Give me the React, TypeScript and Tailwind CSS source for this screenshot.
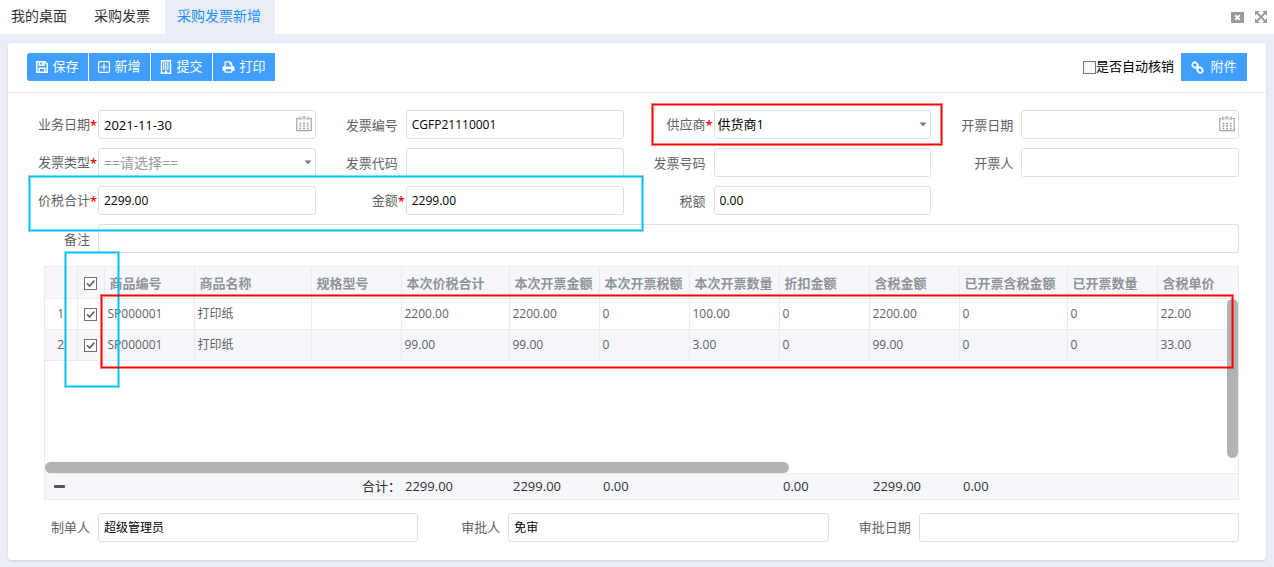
import type { ReactNode } from 'react';

const tabs = ['我的桌面', '采购发票', '采购发票新增'];

const columns = [
  { name: '商品编号', width: 'w-[90px]' },
  { name: '商品名称', width: 'w-[117px]' },
  { name: '规格型号', width: 'w-[90px]' },
  { name: '本次价税合计', width: 'w-[108px]' },
  { name: '本次开票金额', width: 'w-[90px]' },
  { name: '本次开票税额', width: 'w-[90px]' },
  { name: '本次开票数量', width: 'w-[90px]' },
  { name: '折扣金额', width: 'w-[90px]' },
  { name: '含税金额', width: 'w-[90px]' },
  { name: '已开票含税金额', width: 'w-[108px]' },
  { name: '已开票数量', width: 'w-[90px]' },
  { name: '含税单价', width: '' },
];

const rows = [
  ['SP000001', '打印纸', '', '2200.00', '2200.00', '0', '100.00', '0', '2200.00', '0', '0', '22.00'],
  ['SP000001', '打印纸', '', '99.00', '99.00', '0', '3.00', '0', '99.00', '0', '0', '33.00'],
];

const totals = ['', '', '合计：', '2299.00', '2299.00', '0.00', '', '0.00', '2299.00', '0.00', '', ''];

const SaveIcon = () => (
  <svg width="12" height="12" viewBox="0 0 12 12" fill="none" stroke="currentColor" strokeWidth="1.5">
    <path d="M.8.8h8.100L11.200 3.100V11.200H.8z" strokeLinejoin="round" />
    <path d="M3.400 1v3.200h4.600V1M3.200 11V7.200h5.600V11" />
    <path d="M6.600 1.500v2" />
  </svg>
);

const AddIcon = () => (
  <svg width="12" height="12" viewBox="0 0 12 12" fill="none" stroke="currentColor" strokeWidth="1.2">
    <rect x=".6" y=".6" width="10.800" height="10.800" rx="1.2" />
    <path d="M6 2.500v7M2.500 6h7" />
  </svg>
);

const BuildingIcon = () => (
  <svg width="12" height="14" viewBox="0 0 12 14" fill="none" stroke="currentColor">
    <path d="M1.5 13V.8h9V13M.6 13.200h10.800" strokeWidth="1.4" />
    <path d="M3 3h6M3 5h6M3 7h6M3 9h6" strokeWidth="1.300" strokeDasharray="1.300 .5" />
    <path d="M6 10.500V13" strokeWidth="2.200" />
  </svg>
);

const PrintIcon = () => (
  <svg width="13" height="12" viewBox="0 0 13 12">
    <path
      fill="currentColor"
      fillRule="evenodd"
      d="M2.5 5V1q0-.7.7-.7h5l2.2 2.2V5h.5q1.700 0 1.700 1.700v2.600q0 .5-.5.5h-1.700v1.200q0 .7-.7.7H3.200q-.7 0-.7-.7V9.800H1q-.5 0-.5-.5V6.700Q.5 5 2.200 5zM3.700 1.500v4h5.500V3.700H7.500V1.500zM3.700 8.300v2.200h5.500V8.300z"
    />
  </svg>
);

const LinkIcon = () => (
  <svg width="13" height="13" viewBox="0 0 13 13" fill="none" stroke="currentColor" strokeWidth="1.8">
    <rect x="1.200" y="1.800" width="5.600" height="4.600" rx="2.300" transform="rotate(45 4 4.100)" />
    <rect x="6.200" y="6.800" width="5.600" height="4.600" rx="2.300" transform="rotate(45 9 9.100)" />
    <path d="M5.200 5.200l2.600 2.600" strokeWidth="1.500" />
  </svg>
);

const CloseIcon = () => (
  <svg width="13" height="11" viewBox="0 0 13 11">
    <rect width="13" height="11" rx="1" fill="#999" />
    <path d="M4.200 3.200l4.600 4.600M8.800 3.200L4.200 7.800" stroke="#fff" strokeWidth="2" />
  </svg>
);

const ExpandIcon = () => (
  <svg width="12" height="12" viewBox="0 0 12 12" fill="#999" stroke="#999">
    <path d="M2 2l8 8M10 2l-8 8" strokeWidth="1.800" />
    <path d="M0 0h4.800L0 4.800zM12 0v4.800L7.200 0zM0 12V7.200L4.800 12zM12 12H7.200L12 7.200z" stroke="none" />
  </svg>
);

const CalendarIcon = () => (
  <svg
    className="pointer-events-none absolute right-1 top-1.5"
    width="16"
    height="16"
    viewBox="0 0 16 16"
    fill="none"
    stroke="#a3a3a3"
  >
    <path d="M2.800 2.500H.8v12.200h14.400V2.500h-2M6 2.500h.8M9.200 2.500h.8" strokeWidth="1.200" />
    <path d="M3.500 .5v3h1.500v-3M7.200 3.500v-3h1.500v3M11 .5v3h1.500v-3" strokeWidth=".8" />
    <path d="M3.300 7.500h9.700M3.300 10h9.700M3.300 12.500h9.700" strokeWidth="1.500" strokeDasharray="2 1.700" />
  </svg>
);

const ArrowIcon = () => (
  <svg className="pointer-events-none absolute right-1 top-3" width="8" height="5" viewBox="0 0 8 5">
    <path d="M.5.5h7L4 4.200z" fill="#777" />
  </svg>
);

// Rectangular marker drawn over the form
const Marker = ({ className }: { className: string }) => (
  <div className={`pointer-events-none absolute z-10 border ${className}`} />
);

const red = 'border-[#ff0000] shadow-[0_0_0_1px_rgba(255,0,0,0.5),inset_0_0_0_1px_rgba(255,0,0,0.5)]';
const blue = 'border-[#00bfff] shadow-[0_0_0_1px_rgba(0,191,255,0.5),inset_0_0_0_1px_rgba(0,191,255,0.5)]';

const box = 'block h-[29px] w-full rounded-[3px] border border-[#dcdfe6] bg-white outline-none';

type FieldProps = {
  id: string;
  label: string;
  value?: string;
  required?: boolean;
  select?: boolean;
  date?: boolean;
  className?: string;
  children?: ReactNode;
};

const Field = ({ id, label, value = '', required, select, date, className = '', children }: FieldProps) => (
  <div className={`relative flex items-center ${className}`}>
    <label htmlFor={id} className="flex w-[90px] shrink-0 justify-end pt-0.5 text-[13px] text-[#606266]">
      {label}
      <span className="w-2 pt-px font-semibold text-[#ff0000]">{required && '*'}</span>
    </label>
    <div className="relative min-w-0 flex-1">
      {select ? (
        <>
          <select
            id={id}
            className={`${box} appearance-none ${
              value.startsWith('=') ? 'px-[5px] text-sm text-[#999]' : 'px-[3px] text-[13px] text-black'
            }`}
          >
            <option>{value}</option>
          </select>
          <ArrowIcon />
        </>
      ) : (
        <input
          id={id}
          type="text"
          defaultValue={value}
          className={`${box} px-[5px] text-black ${date ? 'text-[13px]' : 'text-xs'}`}
        />
      )}
      {date && <CalendarIcon />}
    </div>
    {children}
  </div>
);

const ToolButton = ({ icon, text, className = 'w-[61px]' }: { icon: ReactNode; text: string; className?: string }) => (
  <button
    type="button"
    className={`flex h-7 items-center justify-center gap-1 bg-[#409eff] text-[13px] text-white ${className}`}
  >
    {icon}
    {text}
  </button>
);

const Check = ({ label }: { label: string }) => (
  <span className="relative mx-auto mt-0.5 block size-[13px]">
    <input
      type="checkbox"
      defaultChecked
      aria-label={label}
      className="block size-[13px] appearance-none border border-[#707070] bg-white"
    />
    <svg className="pointer-events-none absolute inset-0" width="13" height="13" viewBox="0 0 13 13" fill="none">
      <path d="M3 6.200l2.600 2.800L10.300 3.600" stroke="#606060" strokeWidth="1.600" />
    </svg>
  </span>
);

const Columns = () => (
  <colgroup>
    <col className="w-8" />
    <col className="w-[27px]" />
    {columns.map((column) => (
      <col key={column.name} className={column.width} />
    ))}
  </colgroup>
);

const App = () => {
  return (
    <div className="min-h-screen bg-[#e9edf6] font-['Open_Sans','Noto_Sans_CJK_SC',sans-serif] text-[13px]">
      {/* Tabs */}
      <header className="flex h-[34px] items-center bg-white">
        <nav className="flex h-full flex-1">
          {tabs.map((tab, index) => (
            <a
              key={tab}
              href="#"
              className={`flex h-full items-center pb-0.5 text-sm ${index === 0 ? 'pl-[11px]' : 'pl-3'} ${
                index === 2 ? 'bg-[#e9edf6] pr-3.5 text-[#1e90ff]' : 'pr-[15px] text-[#303133]'
              }`}
            >
              {tab}
            </a>
          ))}
        </nav>
        <div className="flex items-center gap-[11px] pr-[7px]">
          <button type="button" aria-label="关闭">
            <CloseIcon />
          </button>
          <button type="button" aria-label="全屏">
            <ExpandIcon />
          </button>
        </div>
      </header>

      <main className="mx-2 mt-[9px] rounded-[3px] bg-white pb-[18px] shadow-sm">
        {/* Toolbar */}
        <div className="flex items-center border-b border-[#e9ebf3] pb-[11px] pl-[19px] pr-[19px] pt-2.5">
          <div className="flex flex-1 gap-px">
            <ToolButton icon={<SaveIcon />} text="保存" className="w-[61px] rounded-l-[3px]" />
            <ToolButton icon={<AddIcon />} text="新增" />
            <ToolButton icon={<BuildingIcon />} text="提交" />
            <ToolButton icon={<PrintIcon />} text="打印" className="w-[62px]" />
          </div>
          <label className="mr-[7px] flex items-center text-[13px] text-black">
            <input type="checkbox" className="size-[13px] appearance-none border border-[#767676] bg-[#f8f8f8]" />
            是否自动核销
          </label>
          <button
            type="button"
            className="flex h-7 w-[66px] items-center justify-center gap-1.5 bg-[#409eff] text-[13px] text-white"
          >
            <LinkIcon />
            附件
          </button>
        </div>

        {/* Invoice form */}
        <form className="relative grid grid-cols-4 gap-y-[9px] pr-[27px] pt-[17px]">
          <Field id="bizDate" label="业务日期" value="2021-11-30" required date />
          <Field id="invoiceNo" label="发票编号" value="CGFP21110001" />
          <Field id="supplier" label="供应商" value="供货商1" required select>
            <Marker className={`-bottom-1.5 -right-[11px] -top-1.5 left-7 ${red}`} />
          </Field>
          <Field id="invoiceDate" label="开票日期" date />
          <Field id="invoiceType" label="发票类型" value="==请选择==" required select />
          <Field id="invoiceCode" label="发票代码" />
          <Field id="invoiceNumber" label="发票号码" />
          <Field id="drawer" label="开票人" />
          <Field id="total" label="价税合计" value="2299.00" required />
          <Field id="amount" label="金额" value="2299.00" required />
          <Field id="tax" label="税额" value="0.00" />
          <Field id="remark" label="备注" className="col-span-4" />
          <Marker className={`-mr-1.5 left-[21px] right-1/2 top-[83px] h-[55px] ${blue}`} />
        </form>

        {/* Goods table */}
        <section className="relative ml-9 mr-[27px] mt-[13px] border border-[#e9ebf3]">
          <div className="relative h-[206px] overflow-hidden">
            <table className="w-full table-fixed border-collapse">
              <Columns />
              <thead>
                <tr className="h-[31px] border-b border-[#e9ebf3] bg-[#f5f7fa] text-left text-[13px] text-[#909399]">
                  <th className="border-r border-[#e9ebf3]" />
                  <th className="border-r border-[#e9ebf3] p-0">
                    <Check label="全选" />
                  </th>
                  {columns.map((column) => (
                    <th
                      key={column.name}
                      className="whitespace-nowrap border-r border-[#e9ebf3] p-0 pl-[5px] pt-0.5 font-bold last:border-r-0"
                    >
                      {column.name}
                    </th>
                  ))}
                </tr>
              </thead>
              <tbody>
                {rows.map((row, index) => (
                  <tr
                    key={index}
                    className="h-[31px] border-b border-[#e9ebf3] text-xs text-[#606266] even:bg-[#f5f7fa]"
                  >
                    <td className="border-r border-[#e9ebf3] p-0 text-center">{index + 1}</td>
                    <td className="border-r border-[#e9ebf3] p-0">
                      <Check label={`选择第${index + 1}行`} />
                    </td>
                    {row.map((cell, cellIndex) => (
                      <td key={cellIndex} className="border-r border-[#e9ebf3] p-0 pl-[3px] last:border-r-0">
                        {cell}
                      </td>
                    ))}
                  </tr>
                ))}
              </tbody>
            </table>
            {/* Scrollbars */}
            <div className="absolute bottom-[15px] right-0 top-8 w-[11px] rounded-full bg-[#b2b2b2]" />
            <div className="absolute bottom-0 left-0 h-[11px] w-[744px] rounded-full bg-[#b2b2b2]" />
          </div>

          <table className="w-full table-fixed border-collapse border-t border-[#e9ebf3] bg-[#f5f7fa]">
            <Columns />
            <tbody>
              <tr className="h-[25px] text-[13px] text-[#303133]">
                <td className="p-0">
                  <button
                    type="button"
                    aria-label="收起"
                    className="ml-[9px] block h-[3px] w-[11px] rounded-[1px] bg-[#555]"
                  />
                </td>
                <td />
                {totals.map((total, index) => (
                  <td
                    key={index}
                    className={`whitespace-nowrap p-0 leading-5 ${index === 2 ? 'text-right' : 'pl-1'}`}
                  >
                    {total}
                  </td>
                ))}
              </tr>
            </tbody>
          </table>

          <Marker className={`-top-[15px] left-5 h-[135px] w-[54px] ${blue}`} />
          <Marker className={`left-14 right-[5px] top-7 h-[73px] ${red}`} />
        </section>

        {/* Approval */}
        <div className="grid grid-cols-3 pr-[27px] pt-[13px]">
          <Field id="creator" label="制单人" value="超级管理员" />
          <Field id="approver" label="审批人" value="免审" />
          <Field id="approveDate" label="审批日期" />
        </div>
      </main>
    </div>
  );
};

export default App;
